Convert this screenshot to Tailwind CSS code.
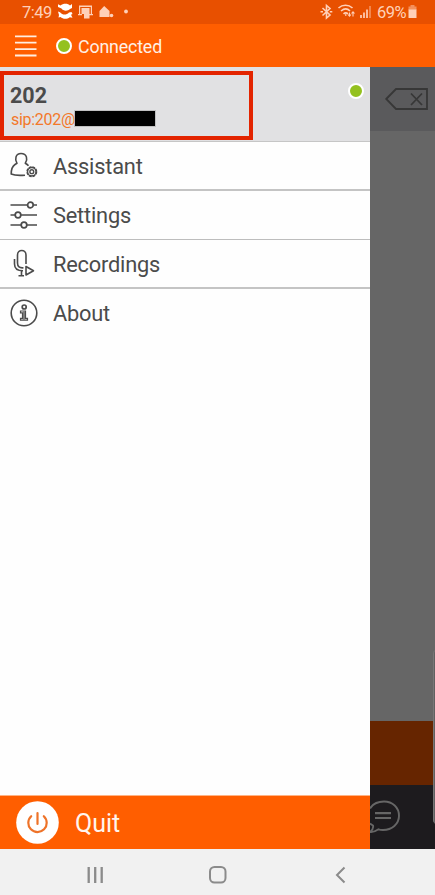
<!DOCTYPE html>
<html lang="en">
<head>
<meta charset="utf-8">
<title>Menu</title>
<script src="https://cdn.jsdelivr.net/npm/@tailwindcss/browser@4"></script>
</head>
<body class="w-[435px] h-[895px] overflow-hidden flex flex-col bg-white font-['Roboto',sans-serif] text-[#4b4b4b]">
  <!-- Status bar -->
  <div class="h-6 shrink-0 bg-[#e85000] flex items-center justify-between pl-[22px] pr-[18px] text-[#ffd0b8]">
    <div class="flex items-center">
      <span class="w-[35px] pt-px text-[16.500px] leading-6 whitespace-nowrap tracking-[-0.500px]">7:49</span>
      <svg class="w-[74px] h-6" viewBox="57 0 74 24" fill="currentColor">
        <g fill="#fff"><path d="M58 4.200l2.500 1.300C63 3.300 68 3.300 70 5.500l2-1.500v4l-2 1c-2.500 2.500-7 2-8.500-.5L58 7z"/><path d="M58 11.500l2 .8c2.500 3 6.500 3 9 .2l2.500-.5 1 2-1.500.8 1.500 3-2.700-.6c-2.800 2.300-7 2-9.300-.2l-2 .5.500-2.500z"/></g>
        <path d="M79 5.500h13V15h-1.200V7h-10.600v8H79z"/><path d="M78 14h4v1.200h-4zM89 14h4v1.200h-4z"/><path d="M81.500 8h8v10.500h-5.500V14h-2.500z"/>
        <path d="M104.200 6l5.300 5v6h-10v-6z"/><circle cx="111.500" cy="15.500" r="1.800"/><circle cx="126" cy="11.500" r="1.900"/>
      </svg>
    </div>
    <div class="flex items-center">
      <svg class="w-[57px] h-6" viewBox="320 0 57 24" fill="none" stroke="currentColor" stroke-width="1.600">
        <path d="M322.500 8l7.500 7-3.500 3V5.500L330 8.500l-7.500 7"/><path d="M320.500 11.700h2.500M329.800 11.700h2.500"/>
        <path d="M338.500 8c4-3.600 10-3.600 14 0M341 11c3-2.500 6.500-2.500 9 0M343.500 13.800c1.500-1.300 3-1.300 4.500 0"/><path d="M345.800 14v2M349.500 12.500v4M353 12.500v4M348 14.500l1.500 1.700 1.500-1.700M351.500 13.500l1.500-1.700 1.500 1.700" stroke-width="1.100"/>
        <path d="M361 15v3M364 12.500V18M367 9.500V18" stroke-width="1.700"/><path d="M370 6v12" stroke-width="1.700" opacity=".5"/>
      </svg>
      <span class="w-[31px] pt-px text-[16.500px] leading-6 whitespace-nowrap tracking-[-0.500px]">69%</span>
      <svg class="w-[9px] h-6" viewBox="0 0 9 24" fill="currentColor"><path opacity=".5" d="M2.500 5h4v1.500h2V10H.5V6.500h2z"/><path d="M.5 9.500h8V18h-8z"/></svg>
    </div>
  </div>
  <!-- App bar -->
  <div class="h-[43px] shrink-0 bg-[#ff5e00] flex items-center pl-[15px] text-white">
    <svg class="w-[22px] h-[43px]" viewBox="0 0 22 43" stroke="#ffede0" stroke-width="1.800"><path d="M0 12.300h21.500M0 18.700h21.500M0 25.200h21.500M0 31.500h21.500"/></svg>
    <div class="ml-[19px] mt-px w-4 h-4 rounded-full bg-[#94c11f] border-[2.500px] border-white"></div>
    <span class="ml-[6px] mt-[2px] text-[17.800px] leading-5 tracking-[-0.150px] text-[#fff0e6]">Connected</span>
  </div>
  <!-- Drawer and dimmed dialer -->
  <div class="h-[782px] shrink-0 flex">
    <aside class="w-[370px] flex flex-col bg-[#fefefe]">
      <div class="h-[74.500px] shrink-0 bg-[#e1e1e3] border-b-[1.500px] border-[#c6c6c6] flex justify-between pt-[4px] pr-[6px]">
        <div class="w-[253px] h-[69px] border-4 border-[#e32400] pl-[7px] pt-[7px]">
          <div class="text-[21.500px] font-bold leading-[26px] relative -left-px top-px">202</div>
          <div class="flex items-center h-[22px] text-[16px] leading-[22px] tracking-[-0.300px] text-[#f3782a]"><span class="w-[64px] pt-[2px] whitespace-nowrap">sip:202@</span><span class="w-20 h-[15px] bg-black -mt-px outline outline-[#aaa]/60"></span></div>
        </div>
        <div class="mt-[12px] w-4 h-4 rounded-full bg-[#94c11f] border-[2.500px] border-white"></div>
      </div>
      <nav class="text-[21.800px] leading-7 tracking-[-0.200px] flex flex-col">
        <div class="h-[49px] border-b-2 border-[#c4c4c4] flex items-center pl-[10px] gap-[15px]">
          <svg class="w-7 h-7" viewBox="0 0 28 28" fill="none" stroke="#4b4b4b" stroke-width="1.600" stroke-linejoin="round"><path d="M15 24.200C10 24.600 4 24.300 1.200 23c0-4 .8-7.500 3.800-9.500l2-1.200c-2.500-4-1.500-9.800 4-9.800 6 0 7 5.800 4.300 9.800 1.400.8 2.400 1.500 3.200 2.500"/><circle cx="21.800" cy="20.700" r="4.700" stroke-width="1.600" stroke-dasharray="2.700 1"/><circle cx="21.800" cy="20.700" r="4.200" stroke-width="1.300"/><circle cx="21.800" cy="20.700" r="1.900" stroke-width="1.400"/></svg>
          <span class="pt-[3px]">Assistant</span>
        </div>
        <div class="h-[49px] border-b-[1.500px] border-[#bdbdbd] flex items-center pl-[10px] gap-[15px]">
          <svg class="w-7 h-7" viewBox="0 0 28 28" fill="none" stroke="#4b4b4b" stroke-width="1.700"><path d="M.5 4h17M23.500 4H27M.5 14H5M11 14h16M.5 24H11M17 24h10"/><circle cx="20.400" cy="4" r="2.800"/><circle cx="8" cy="14" r="2.800"/><circle cx="14" cy="24" r="2.800"/></svg>
          <span class="pt-[3px]">Settings</span>
        </div>
        <div class="h-[49px] border-b-2 border-[#c4c4c4] flex items-center pl-[10px] gap-[15px]">
          <svg class="w-7 h-7" viewBox="0 0 28 28" fill="none" stroke="#4b4b4b" stroke-width="1.600" stroke-linejoin="round"><path d="M13.500 18.800C9.500 19.300 7.500 17.500 7.500 14V6c0-6 8.500-6 8.500 0v9M4.500 10v5c0 4.500 3.500 6.800 8.500 6.800M11.500 22v4.500M8.500 26.700H14M16 17.500v8.500l7.500-4.200z"/></svg>
          <span class="pt-[3px]">Recordings</span>
        </div>
        <div class="h-[49px] flex items-center pl-[10px] gap-[15px]">
          <svg class="w-7 h-7" viewBox="0 0 28 28" fill="none" stroke="#4b4b4b" stroke-width="1.600"><circle cx="14" cy="14" r="12.800"/><circle cx="14.200" cy="8" r="2" stroke-width="1.700"/><path d="M10.500 12h5v7.300h2v1.900h-7v-1.900h2v-5.400h-2z" stroke-width="1.200"/><path d="M14 12.500v8" stroke-width="1.400"/></svg>
          <span class="pt-[2px]">About</span>
        </div>
      </nav>
      <div class="mt-auto h-[54px] bg-[#ff5e00] border-t border-[#ffb384] flex items-center pl-4 text-[25px] text-[#fff5ee]">
        <svg class="w-[43px] h-[43px]" viewBox="0 0 43 43" fill="none" stroke="#ee7329" stroke-width="2.200" stroke-linecap="round"><circle cx="21.500" cy="21.500" r="21.300" fill="#fff" stroke="none"/><path d="M21.500 12v11M15.200 15.200a9.200 9.200 0 1 0 12.600 0"/></svg>
        <span class="ml-4 mt-[3px]">Quit</span>
      </div>
    </aside>
    <div class="relative w-[65px] flex flex-col overflow-hidden">
      <div class="h-16 bg-[#5a5a5c] pl-[15px] pt-[20px]">
        <svg class="w-11 h-6" viewBox="0 0 44 24" fill="none" stroke="#373737" stroke-width="1.800"><path d="M1.200 12L11 2h31v20H11zM26 6.500l11 11.500M37 6.500L26 18"/></svg>
      </div>
      <div class="h-[590px] bg-[#666]"></div>
      <div class="h-16 bg-[#662500]"></div>
      <div class="h-16 bg-[#1d1b1e]">
        <svg class="w-[65px] h-16" viewBox="0 0 65 64" fill="none" stroke="#666" stroke-width="1.900"><path d="M0 23.500C3 18.500 8 16.500 14 16.500c8.500 0 15 6 15 14.300S22 45 13 45c-2 0-3.500-.3-4.500-.7C6 46 3 47.500 0 47c2.500-2 3.500-4.500 3-6.500L0 38.500"/><path d="M5 28.200h16M5 33h16" stroke-width="2.200"/></svg>
      </div>
      <!-- Edge panel handle -->
      <div class="absolute left-[63px] top-[583px] w-2 h-[174px] rounded-l-[4px] bg-[#606060] border-l border-[#777]"></div>
    </div>
  </div>
  <!-- System navigation -->
  <div class="h-[46px] shrink-0 bg-[#f1f1f1]">
    <svg class="w-[435px] h-[46px]" viewBox="0 0 435 46" fill="none" stroke="#8b8b8b" stroke-width="2"><path d="M88.700 18v16M95.200 18v16M101.700 18v16" stroke-width="2.300"/><rect x="210" y="18" width="15.500" height="15.500" rx="4.500"/><path d="M344.500 18.500l-7.500 7.500 7.500 7.500"/></svg>
  </div>
</body>
</html>
